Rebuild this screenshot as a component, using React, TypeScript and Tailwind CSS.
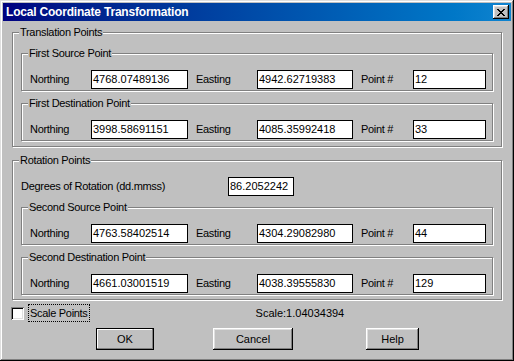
import React from "react";

const font = "font-['Liberation_Sans',Arial,sans-serif]";

function Group({
  label,
  className,
  children,
}: {
  label: string;
  className?: string;
  children?: React.ReactNode;
}) {
  return (
    <div
      className={`relative border border-[#808080] shadow-[1px_1px_0_#fff,inset_1px_1px_0_#fff] ${className ?? ""}`}
    >
      <span className="absolute left-[6px] top-[-7px] bg-[#c0c0c0] px-[1px] leading-[13px] tracking-[-0.3px] whitespace-nowrap">
        {label}
      </span>
      {children}
    </div>
  );
}

function Field({ value, w }: { value: string; w: string }) {
  return (
    <div
      className={`${w} h-[19px] bg-white border border-black pl-[1px] flex items-center leading-[13px] whitespace-nowrap overflow-hidden`}
    >
      {value}
    </div>
  );
}

function Label({ text, w }: { text: string; w: string }) {
  return (
    <div className={`${w} leading-[13px] tracking-[-0.3px] whitespace-nowrap`}>
      {text}
    </div>
  );
}

function PointGroup({
  label,
  northing,
  easting,
  point,
  className,
}: {
  label: string;
  northing: string;
  easting: string;
  point: string;
  className?: string;
}) {
  return (
    <Group label={label} className={`h-[38px] pt-[16px] pl-[8px] ${className ?? ""}`}>
      <div className="flex items-center">
        <Label text="Northing" w="w-[61px]" />
        <Field value={northing} w="w-[97px]" />
        <div className="w-[8px]" />
        <Label text="Easting" w="w-[61px]" />
        <Field value={easting} w="w-[96px]" />
        <div className="w-[8px]" />
        <Label text="Point #" w="w-[52px]" />
        <Field value={point} w="w-[73px]" />
      </div>
    </Group>
  );
}

function Button({
  children,
  w,
  isDefault,
}: {
  children: React.ReactNode;
  w: string;
  isDefault?: boolean;
}) {
  return (
    <div
      className={`${w} h-[22px] bg-[#c0c0c0] flex items-center justify-center leading-[13px] ${
        isDefault
          ? "border border-black shadow-[inset_-1px_-1px_0_#808080,inset_1px_1px_0_#fff]"
          : "shadow-[inset_-1px_-1px_0_#000,inset_1px_1px_0_#fff,inset_-2px_-2px_0_#808080,inset_2px_2px_0_#dfdfdf]"
      }`}
    >
      {children}
    </div>
  );
}

export default function App() {
  return (
    <div
      className={`${font} text-[11px] text-black w-[514px] h-[361px] bg-[#c0c0c0] p-[3px] flex flex-col shadow-[inset_-1px_-1px_0_#000,inset_1px_1px_0_#dfdfdf,inset_-2px_-2px_0_#808080,inset_2px_2px_0_#fff]`}
    >
      {/* Title bar */}
      <div className="h-[18px] flex items-center justify-between pl-[3px] pr-[2px] bg-gradient-to-r from-[#000080] to-[#1084d0]">
        <span className="text-white font-bold text-[12px] tracking-[-0.2px] leading-[14px] whitespace-nowrap">
          Local Coordinate Transformation
        </span>
        <div className="w-[16px] h-[14px] bg-[#c0c0c0] flex items-center justify-center shadow-[inset_-1px_-1px_0_#000,inset_1px_1px_0_#fff,inset_-2px_-2px_0_#808080,inset_2px_2px_0_#dfdfdf]">
          <svg width="8" height="7" viewBox="0 0 8 7" shapeRendering="crispEdges">
            <path
              d="M0 0h2v1h-2zM6 0h2v1h-2zM1 1h2v1h-2zM5 1h2v1h-2zM2 2h4v1h-4zM3 3h2v1h-2zM2 4h4v1h-4zM1 5h2v1h-2zM5 5h2v1h-2zM0 6h2v1h-2zM6 6h2v1h-2z"
              fill="#000"
            />
          </svg>
        </div>
      </div>

      {/* Translation Points */}
      <Group
        label="Translation Points"
        className="mt-[11px] ml-[9px] w-[490px] h-[115px] pt-[20px] px-[8px]"
      >
        <PointGroup
          label="First Source Point"
          northing="4768.07489136"
          easting="4942.62719383"
          point="12"
        />
        <PointGroup
          label="First Destination Point"
          northing="3998.58691151"
          easting="4085.35992418"
          point="33"
          className="mt-[12px]"
        />
      </Group>

      {/* Rotation Points */}
      <Group
        label="Rotation Points"
        className="mt-[13px] ml-[9px] w-[490px] h-[140px] pt-[16px] px-[8px]"
      >
        <div className="flex items-center">
          <Label text="Degrees of Rotation (dd.mmss)" w="w-[207px]" />
          <Field value="86.2052242" w="w-[66px]" />
        </div>
        <PointGroup
          label="Second Source Point"
          northing="4763.58402514"
          easting="4304.29082980"
          point="44"
          className="mt-[11px]"
        />
        <PointGroup
          label="Second Destination Point"
          northing="4661.03001519"
          easting="4038.39555830"
          point="129"
          className="mt-[12px]"
        />
      </Group>

      {/* Bottom */}
      <div className="mt-[4px] ml-[8px] h-[18px] flex items-center">
        <div className="w-[13px] h-[13px] bg-white shadow-[inset_1px_1px_0_#808080,inset_-1px_-1px_0_#fff,inset_2px_2px_0_#000,inset_-2px_-2px_0_#dfdfdf]" />
        <div className="ml-[4px] h-[18px] px-[1px] flex items-center border border-dotted border-black leading-[13px] tracking-[-0.3px]">
          Scale Points
        </div>
        <div className="ml-[166px] leading-[13px]">Scale:1.04034394</div>
      </div>
      <div className="mt-[6px] ml-[93px] flex">
        <Button w="w-[58px]" isDefault>
          OK
        </Button>
        <div className="w-[59px]" />
        <Button w="w-[80px]">Cancel</Button>
        <div className="w-[73px]" />
        <Button w="w-[53px]">Help</Button>
      </div>
    </div>
  );
}
